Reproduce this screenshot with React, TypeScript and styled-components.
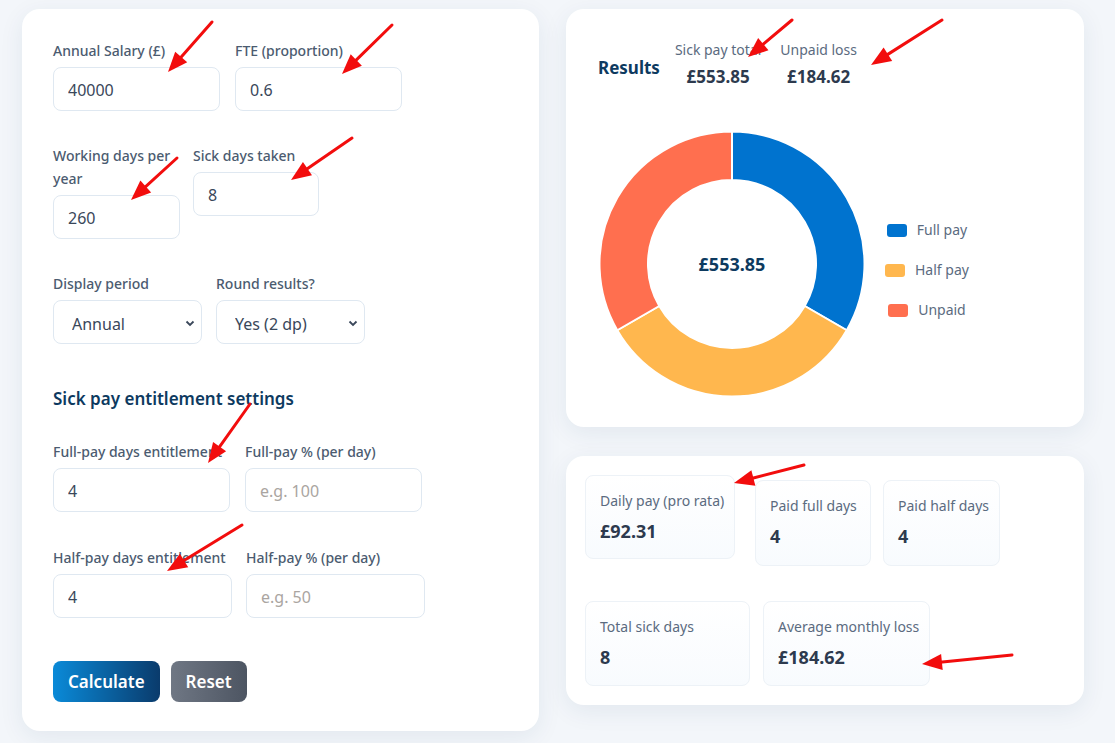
import React from 'react';
import styled, { createGlobalStyle } from 'styled-components';

const GlobalStyle = createGlobalStyle`
  html, body {
    margin: 0;
    padding: 0;
    background: #f3f6fa;
  }
  body {
    font-family: 'Noto Sans', 'Open Sans', Arial, sans-serif;
  }
  * {
    box-sizing: border-box;
  }
`;

const Page = styled.div`
  position: relative;
  width: 1115px;
  height: 743px;
  overflow: hidden;
  display: flex;
  align-items: flex-start;
  gap: 27px;
  padding: 9px 0 0 22px;
`;

const Card = styled.section`
  background: #fff;
  border-radius: 18px;
  box-shadow: 0 6px 24px rgba(30, 60, 100, 0.08);
`;

const FormCard = styled(Card)`
  width: 517px;
  padding: 30px 31px 29px;
`;

const FieldRow = styled.div<{ $gap: number; $mb?: number }>`
  display: flex;
  align-items: flex-start;
  gap: ${(p) => p.$gap}px;
  margin-bottom: ${(p) => (p.$mb ?? 33)}px;
`;

const Field = styled.label<{ $w: number }>`
  display: flex;
  flex-direction: column;
  width: ${(p) => p.$w}px;
`;

const FieldLabel = styled.span`
  font-size: 14px;
  line-height: 23px;
  font-weight: 500;
  color: #4b5b70;
  margin-bottom: 5px;
`;

const TextInput = styled.input`
  height: 44px;
  width: 100%;
  border: 1px solid #dfe8f1;
  border-radius: 8px;
  padding: 2px 14px 0;
  font-family: inherit;
  font-size: 16px;
  color: #3a475a;
  background: #fff;
  outline: none;

  &::placeholder {
    color: #aaa5a1;
  }
`;

const SelectWrap = styled.div`
  position: relative;
  width: 100%;
`;

const Select = styled.select`
  appearance: none;
  height: 44px;
  width: 100%;
  border: 1px solid #dfe8f1;
  border-radius: 8px;
  padding: 3px 18px 0;
  font-family: inherit;
  font-size: 16px;
  color: #3a475a;
  background: #fff;
  outline: none;
`;

const Chevron = styled.svg`
  position: absolute;
  right: 7px;
  top: 20px;
  pointer-events: none;
`;

const SectionTitle = styled.h3`
  margin: 0 0 29px;
  font-size: 17px;
  line-height: 24px;
  font-weight: 600;
  color: #0d3a5f;
`;

const Actions = styled.div`
  display: flex;
  gap: 11px;
`;

const Button = styled.button<{ $variant: 'primary' | 'muted' }>`
  height: 41px;
  padding: 0 15px;
  border: none;
  border-radius: 8px;
  font-family: inherit;
  font-size: 17px;
  font-weight: 600;
  color: #fff;
  background: ${(p) =>
    p.$variant === 'primary'
      ? 'linear-gradient(90deg, #0a8ad8 0%, #0a3b6c 100%)'
      : 'linear-gradient(90deg, #6f7784 0%, #4d5562 100%)'};
`;

const Side = styled.div`
  display: flex;
  flex-direction: column;
  gap: 29px;
  width: 518px;
`;

const ResultsCard = styled(Card)`
  padding: 31px 32px 30px 33px;
`;

const ResultsHead = styled.div`
  display: flex;
  align-items: center;
`;

const ResultsTitle = styled.h2`
  margin: 5px 15px 0 -1px;
  font-size: 17px;
  font-weight: 700;
  color: #0d3a5f;
`;

const HeadStat = styled.div`
  display: flex;
  flex-direction: column;
  align-items: center;
  margin-right: 19px;
`;

const HeadLabel = styled.span`
  font-size: 14px;
  line-height: 20px;
  color: #5b6b80;
`;

const HeadValue = styled.span`
  margin-top: 5px;
  font-size: 17px;
  line-height: 24px;
  font-weight: 700;
  color: #2d3a4e;
`;

const ChartRow = styled.div`
  display: flex;
  align-items: center;
  margin-top: 42px;
`;

const Legend = styled.ul`
  list-style: none;
  margin: 12px 0 0 20px;
  padding: 0;
  display: flex;
  flex-direction: column;
  align-items: center;
  gap: 20px;
`;

const LegendItem = styled.li`
  display: flex;
  align-items: center;
  gap: 10px;
  font-size: 14px;
  line-height: 20px;
  color: #5b6b80;
`;

const Swatch = styled.span<{ $color: string }>`
  width: 20px;
  height: 13px;
  border-radius: 3px;
  background: ${(p) => p.$color};
`;

const StatsCard = styled(Card)`
  padding: 19px;
`;

const TileRow = styled.div<{ $mt?: number }>`
  display: flex;
  align-items: flex-start;
  margin-top: ${(p) => p.$mt ?? 0}px;
`;

const Tile = styled.div<{ $w: number; $h: number; $ml?: number; $mt?: number }>`
  width: ${(p) => p.$w}px;
  height: ${(p) => p.$h}px;
  margin-left: ${(p) => p.$ml ?? 0}px;
  margin-top: ${(p) => p.$mt ?? 0}px;
  padding: 15px 14px;
  border: 1px solid #edf2f7;
  border-radius: 8px;
  background: linear-gradient(180deg, #ffffff 0%, #f8fbfe 100%);
`;

const TileLabel = styled.div`
  font-size: 14px;
  line-height: 20px;
  color: #5b6b80;
  white-space: nowrap;
`;

const TileValue = styled.div`
  margin-top: 8px;
  font-size: 18px;
  line-height: 24px;
  font-weight: 700;
  color: #2d3a4e;
`;

const Overlay = styled.svg`
  position: absolute;
  left: 0;
  top: 0;
  pointer-events: none;
`;

const segments = [
  { label: 'Full pay', color: '#0073cf', from: 0, to: 120 },
  { label: 'Half pay', color: '#ffb74e', from: 120, to: 240 },
  { label: 'Unpaid', color: '#ff6f4f', from: 240, to: 360 },
];

function arcPath(cx: number, cy: number, R: number, r: number, a0: number, a1: number) {
  const rad = (a: number) => (a * Math.PI) / 180;
  const pt = (rr: number, a: number) => [cx + rr * Math.sin(rad(a)), cy - rr * Math.cos(rad(a))];
  const large = a1 - a0 > 180 ? 1 : 0;
  const [x0, y0] = pt(R, a0);
  const [x1, y1] = pt(R, a1);
  const [x2, y2] = pt(r, a1);
  const [x3, y3] = pt(r, a0);
  return `M${x0} ${y0} A${R} ${R} 0 ${large} 1 ${x1} ${y1} L${x2} ${y2} A${r} ${r} 0 ${large} 0 ${x3} ${y3} Z`;
}

function Donut() {
  return (
    <svg width="266" height="266" viewBox="0 0 266 266">
      {segments.map((s) => (
        <path
          key={s.label}
          d={arcPath(133, 133, 132.5, 84, s.from, s.to)}
          fill={s.color}
          stroke="#fff"
          strokeWidth="2"
        />
      ))}
      <text
        x="133"
        y="140"
        textAnchor="middle"
        fontFamily="'Noto Sans', Arial, sans-serif"
        fontSize="18"
        fontWeight="700"
        fill="#0d3a5f"
      >
        £553.85
      </text>
    </svg>
  );
}

// annotation arrows drawn over the screenshot: [tailX, tailY, headX, headY]
const arrows = [
  [212, 22, 168, 72],
  [392, 25, 342, 74],
  [177, 158, 131, 200],
  [352, 138, 291, 180],
  [250, 404, 208, 463],
  [242, 525, 167, 571],
  [792, 20, 748, 57],
  [942, 20, 871, 65],
  [804, 465, 734, 483],
  [1012, 655, 922, 664],
];

function Arrow({ a }: { a: number[] }) {
  const [tx, ty, hx, hy] = a;
  const len = Math.hypot(hx - tx, hy - ty);
  const ux = (hx - tx) / len;
  const uy = (hy - ty) / len;
  const bx = hx - ux * 20;
  const by = hy - uy * 20;
  const px = -uy * 8;
  const py = ux * 8;
  return (
    <g>
      <line x1={tx} y1={ty} x2={bx + ux * 2} y2={by + uy * 2} stroke="#f20d0d" strokeWidth="3" strokeLinecap="round" />
      <polygon points={`${hx},${hy} ${bx + px},${by + py} ${bx - px},${by - py}`} fill="#f20d0d" />
    </g>
  );
}

function ChevronIcon() {
  return (
    <Chevron width="10" height="7" viewBox="0 0 10 7">
      <polyline points="1.5,1.5 5,5 8.5,1.5" fill="none" stroke="#3a475a" strokeWidth="1.8" />
    </Chevron>
  );
}

export default function App() {
  return (
    <>
      <GlobalStyle />
      <Page>
        <FormCard>
          <FieldRow $gap={15}>
            <Field $w={167}>
              <FieldLabel>Annual Salary (£)</FieldLabel>
              <TextInput defaultValue="40000" />
            </Field>
            <Field $w={167}>
              <FieldLabel>FTE (proportion)</FieldLabel>
              <TextInput defaultValue="0.6" />
            </Field>
          </FieldRow>
          <FieldRow $gap={13}>
            <Field $w={127}>
              <FieldLabel>Working days per year</FieldLabel>
              <TextInput defaultValue="260" />
            </Field>
            <Field $w={126}>
              <FieldLabel>Sick days taken</FieldLabel>
              <TextInput defaultValue="8" />
            </Field>
          </FieldRow>
          <FieldRow $gap={14} $mb={43}>
            <Field $w={149}>
              <FieldLabel>Display period</FieldLabel>
              <SelectWrap>
                <Select defaultValue="annual">
                  <option value="annual">Annual</option>
                  <option value="monthly">Monthly</option>
                </Select>
                <ChevronIcon />
              </SelectWrap>
            </Field>
            <Field $w={149}>
              <FieldLabel>Round results?</FieldLabel>
              <SelectWrap>
                <Select defaultValue="yes">
                  <option value="yes">Yes (2 dp)</option>
                  <option value="no">No</option>
                </Select>
                <ChevronIcon />
              </SelectWrap>
            </Field>
          </FieldRow>

          <SectionTitle>Sick pay entitlement settings</SectionTitle>

          <FieldRow $gap={15} $mb={34}>
            <Field $w={177}>
              <FieldLabel>Full-pay days entitlement</FieldLabel>
              <TextInput defaultValue="4" />
            </Field>
            <Field $w={177}>
              <FieldLabel>Full-pay % (per day)</FieldLabel>
              <TextInput placeholder="e.g. 100" />
            </Field>
          </FieldRow>
          <FieldRow $gap={14} $mb={43}>
            <Field $w={179}>
              <FieldLabel>Half-pay days entitlement</FieldLabel>
              <TextInput defaultValue="4" />
            </Field>
            <Field $w={179}>
              <FieldLabel>Half-pay % (per day)</FieldLabel>
              <TextInput placeholder="e.g. 50" />
            </Field>
          </FieldRow>

          <Actions>
            <Button $variant="primary">Calculate</Button>
            <Button $variant="muted">Reset</Button>
          </Actions>
        </FormCard>

        <Side>
          <ResultsCard>
            <ResultsHead>
              <ResultsTitle>Results</ResultsTitle>
              <HeadStat>
                <HeadLabel>Sick pay total</HeadLabel>
                <HeadValue>£553.85</HeadValue>
              </HeadStat>
              <HeadStat>
                <HeadLabel>Unpaid loss</HeadLabel>
                <HeadValue>£184.62</HeadValue>
              </HeadStat>
            </ResultsHead>
            <ChartRow>
              <Donut />
              <Legend>
                {segments.map((s) => (
                  <LegendItem key={s.label}>
                    <Swatch $color={s.color} />
                    {s.label}
                  </LegendItem>
                ))}
              </Legend>
            </ChartRow>
          </ResultsCard>

          <StatsCard>
            <TileRow>
              <Tile $w={150} $h={84}>
                <TileLabel>Daily pay (pro rata)</TileLabel>
                <TileValue>£92.31</TileValue>
              </Tile>
              <Tile $w={116} $h={86} $ml={20} $mt={5}>
                <TileLabel>Paid full days</TileLabel>
                <TileValue>4</TileValue>
              </Tile>
              <Tile $w={117} $h={86} $ml={12} $mt={5}>
                <TileLabel>Paid half days</TileLabel>
                <TileValue>4</TileValue>
              </Tile>
            </TileRow>
            <TileRow $mt={35}>
              <Tile $w={165} $h={85}>
                <TileLabel>Total sick days</TileLabel>
                <TileValue>8</TileValue>
              </Tile>
              <Tile $w={167} $h={85} $ml={13}>
                <TileLabel>Average monthly loss</TileLabel>
                <TileValue>£184.62</TileValue>
              </Tile>
            </TileRow>
          </StatsCard>
        </Side>

        <Overlay width="1115" height="743" viewBox="0 0 1115 743">
          {arrows.map((a, i) => (
            <Arrow key={i} a={a} />
          ))}
        </Overlay>
      </Page>
    </>
  );
}
